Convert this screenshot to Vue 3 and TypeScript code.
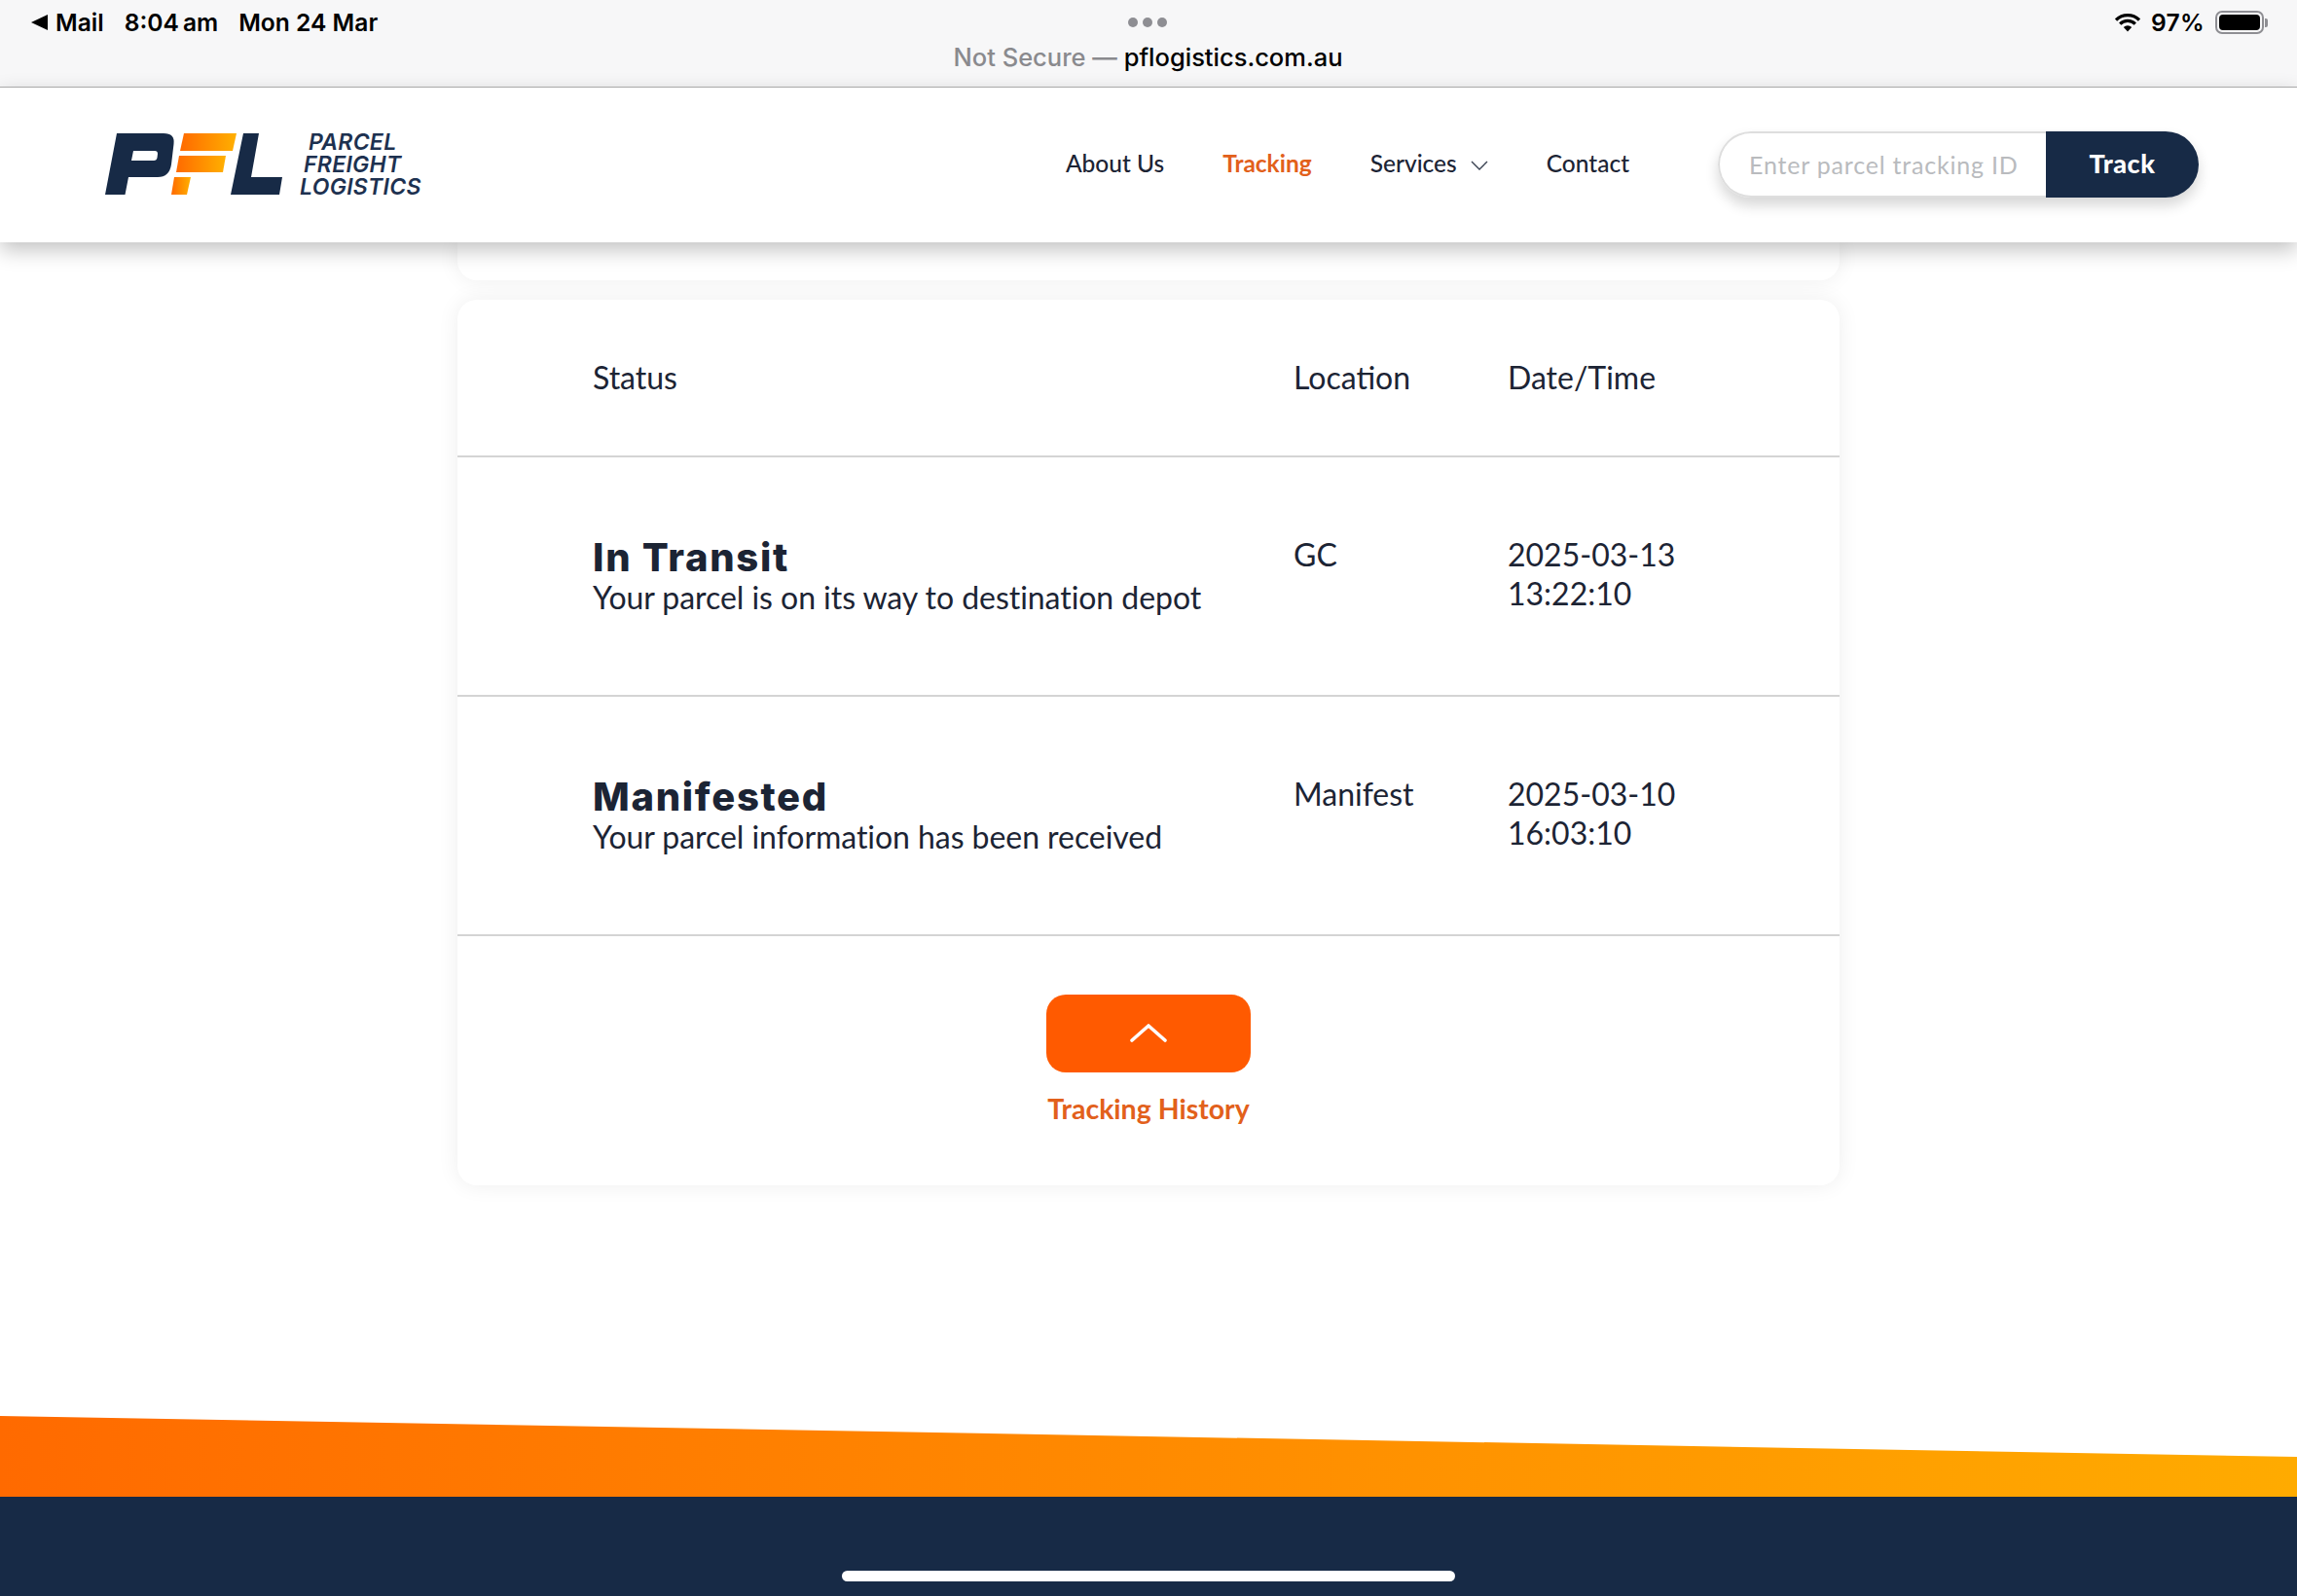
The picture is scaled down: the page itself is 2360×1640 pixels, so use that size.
<script setup lang="ts">
interface TrackingEvent {
  status: string
  detail: string
  location: string
  date: string
  time: string
}

const events: TrackingEvent[] = [
  {
    status: 'In Transit',
    detail: 'Your parcel is on its way to destination depot',
    location: 'GC',
    date: '2025-03-13',
    time: '13:22:10',
  },
  {
    status: 'Manifested',
    detail: 'Your parcel information has been received',
    location: 'Manifest',
    date: '2025-03-10',
    time: '16:03:10',
  },
]

const navLinks = [
  { label: 'About Us', active: false, caret: false },
  { label: 'Tracking', active: true, caret: false },
  { label: 'Services', active: false, caret: true },
  { label: 'Contact', active: false, caret: false },
]
</script>

<template>
  <div class="screen">
    <div class="safari-bar">
      <div class="status-row">
        <div class="status-left">
          <span class="back-mail"><i class="back-tri"></i>Mail</span>
          <span>8:04<span class="ampm">am</span></span>
          <span>Mon 24 Mar</span>
        </div>
        <div class="dots"><i></i><i></i><i></i></div>
        <div class="status-right">
          <svg class="wifi" viewBox="0 0 26 20" width="26" height="20">
            <path d="M1 7.5a17 17 0 0 1 24 0" fill="none" stroke="#000" stroke-width="3.2" />
            <path d="M5.2 11.7a11 11 0 0 1 15.6 0" fill="none" stroke="#000" stroke-width="3.2" />
            <path d="M13 19.5 8.8 15a6 6 0 0 1 8.4 0z" fill="#000" />
          </svg>
          <span class="pct">97%</span>
          <span class="battery"><i class="level"></i></span>
          <i class="battery-cap"></i>
        </div>
      </div>
      <div class="url"><span class="insecure">Not Secure — </span>pflogistics.com.au</div>
    </div>

    <header class="site-header">
      <a class="logo" aria-label="PFL Parcel Freight Logistics">
        <svg class="logo-mark" viewBox="0 0 185 64" width="185" height="64">
          <defs>
            <linearGradient id="flame" x1="0" y1="0" x2="1" y2="0">
              <stop offset="0" stop-color="#ff6a00" />
              <stop offset="1" stop-color="#ffb000" />
            </linearGradient>
          </defs>
          <path
            fill="#172a46"
            fill-rule="evenodd"
            d="M12 0H60Q72 0 70.5 11L68 32Q66 45 54 45H24L20.5 63H0ZM29 18 27 28H50Q53 28 53.5 25L54 21Q54 18 51 18Z"
          />
          <polygon fill="url(#flame)" points="81,0 135,0 131,18 77,18" />
          <polygon fill="url(#flame)" points="76,23 124,23 121,40 73,40" />
          <polygon fill="url(#flame)" points="71,45 88,45 84,63 68,63" />
          <polygon fill="#172a46" points="142,0 158,0 150,45 182,45 179,63 129,63" />
        </svg>
        <span class="wordmark">
          <span class="wm-1">PARCEL</span>
          <span class="wm-2">FREIGHT</span>
          <span class="wm-3">LOGISTICS</span>
        </span>
      </a>

      <nav class="nav">
        <a v-for="link in navLinks" :key="link.label" class="nav-link" :class="{ active: link.active }">
          {{ link.label }}
          <svg v-if="link.caret" class="caret" viewBox="0 0 18 10" width="18" height="10">
            <path d="M1 1l8 8 8-8" fill="none" stroke="#3a4252" stroke-width="1.4" />
          </svg>
        </a>
      </nav>

      <form class="track-form" @submit.prevent>
        <input class="track-input" type="text" placeholder="Enter parcel tracking ID" />
        <button class="track-btn" type="submit">Track</button>
      </form>
    </header>

    <main class="content">
      <div class="card stub"></div>

      <section class="card history">
        <div class="row head">
          <div>Status</div>
          <div>Location</div>
          <div>Date/Time</div>
        </div>

        <div v-for="ev in events" :key="ev.status" class="row event">
          <div>
            <h3 class="ev-title">{{ ev.status }}</h3>
            <p class="ev-detail">{{ ev.detail }}</p>
          </div>
          <div class="cell">{{ ev.location }}</div>
          <div class="cell">{{ ev.date }}<br />{{ ev.time }}</div>
        </div>

        <div class="toggle">
          <button class="toggle-btn" type="button" aria-label="Collapse tracking history">
            <svg viewBox="0 0 38 20" width="38" height="20">
              <path d="M2 18 19 3l17 15" fill="none" stroke="#fff" stroke-width="3.6" stroke-linecap="round" stroke-linejoin="round" />
            </svg>
          </button>
          <span class="toggle-label">Tracking History</span>
        </div>
      </section>
    </main>

    <footer class="footer">
      <div class="wedge"></div>
      <div class="navy"><i class="home-bar"></i></div>
    </footer>
  </div>
</template>

<style>
html,
body {
  margin: 0;
  background: #fff;
}
</style>

<style scoped>
.screen {
  width: 2360px;
  height: 1640px;
  display: flex;
  flex-direction: column;
  overflow: hidden;
  background: #fff;
  font-family: Lato, 'Liberation Sans', sans-serif;
  color: #1c2434;
}

/* ios chrome */
.safari-bar {
  height: 89px;
  flex: none;
  box-sizing: border-box;
  background: #f7f7f8;
  padding: 8px 30px 0 32px;
  font-family: Inter, 'Liberation Sans', sans-serif;
  color: #000;
}
.status-row {
  position: relative;
  display: flex;
  justify-content: space-between;
  align-items: center;
  height: 30px;
  font-size: 24.6px;
  font-weight: 600;
}
.status-left {
  display: flex;
  gap: 21px;
}
.back-mail {
  display: flex;
  align-items: center;
  gap: 8px;
}
.back-tri {
  width: 0;
  height: 0;
  border-style: solid;
  border-width: 8px 17px 8px 0;
  border-color: transparent #000 transparent transparent;
}
.ampm {
  margin-left: 4px;
}
.dots {
  position: absolute;
  left: 1127px;
  top: 10px;
  display: flex;
  gap: 5px;
}
.dots i {
  width: 10px;
  height: 10px;
  border-radius: 50%;
  background: #8e8e93;
}
.status-right {
  display: flex;
  align-items: center;
}
.pct {
  margin-left: 11px;
  letter-spacing: 0.3px;
}
.battery {
  margin-left: 11px;
  width: 50px;
  height: 24px;
  box-sizing: border-box;
  border: 2px solid #8e8e93;
  border-radius: 7px;
  padding: 2px;
  display: flex;
}
.level {
  flex: 1;
  background: #000;
  border-radius: 4px;
}
.battery-cap {
  width: 3px;
  height: 9px;
  background: #8e8e93;
  border-radius: 0 2px 2px 0;
  margin-left: 1px;
}
.url {
  margin: 4px 3px 0 0;
  text-align: center;
  font-size: 25.5px;
  font-weight: 500;
  line-height: 34px;
}
.insecure {
  color: #8a8a8e;
}

/* site header */
.site-header {
  position: relative;
  z-index: 2;
  flex: none;
  height: 160px;
  box-sizing: border-box;
  border-top: 1px solid #a9a9a9;
  background: #fff;
  display: flex;
  align-items: center;
  padding: 0 101px 2px 108px;
  box-shadow: 0 8px 20px rgba(0, 0, 0, 0.24);
}
.logo {
  display: flex;
  align-items: center;
  gap: 15px;
}
.logo-mark {
  display: block;
}
.wordmark {
  display: flex;
  flex-direction: column;
  margin-top: 2px;
  font-family: Inter, 'Liberation Sans', sans-serif;
  font-style: italic;
  font-weight: 600;
  font-size: 23px;
  line-height: 23px;
  letter-spacing: 0.3px;
  color: #1d3150;
}
.wm-1 {
  margin-left: 9px;
}
.wm-2 {
  margin-left: 4px;
}
.nav {
  margin-left: auto;
  display: flex;
  align-items: center;
  gap: 60px;
}
.nav-link {
  display: flex;
  align-items: center;
  gap: 14px;
  margin-top: -2px;
  font-size: 24.5px;
  font-weight: 500;
  color: #1c2434;
}
.nav-link.active {
  color: #e2601b;
  font-weight: 700;
}
.caret {
  margin-top: 4px;
}
.track-form {
  margin-left: 91px;
  width: 494px;
  height: 68px;
  display: flex;
  border-radius: 34px;
  box-shadow: 0 8px 14px rgba(0, 0, 0, 0.16);
}
.track-input {
  flex: 1;
  min-width: 0;
  box-sizing: border-box;
  padding: 0 0 0 30px;
  border: 2px solid #dedede;
  border-right: 0;
  border-radius: 34px 0 0 34px;
  outline: none;
  background: #fff;
  font-family: Lato, sans-serif;
  font-size: 25px;
  letter-spacing: 0.8px;
}
.track-input::placeholder {
  color: #b9bbbe;
  opacity: 1;
}
.track-btn {
  width: 157px;
  border: 0;
  padding: 0 0 2px;
  border-radius: 0 34px 34px 0;
  background: #172a46;
  color: #fff;
  font-family: Lato, sans-serif;
  font-size: 27px;
  font-weight: 900;
  letter-spacing: 0.5px;
}

/* cards */
.content {
  width: 1420px;
  margin: 0 auto;
  flex: none;
  display: flex;
  flex-direction: column;
  gap: 20px;
}
.card {
  background: #fff;
  border-radius: 20px;
  box-shadow: 0 0 22px rgba(0, 0, 0, 0.07);
}
.stub {
  height: 39px;
  border-radius: 0 0 20px 20px;
}
.row {
  display: grid;
  grid-template-columns: 720px 220px 1fr;
  padding-left: 139px;
}
.head {
  height: 160px;
  box-sizing: border-box;
  padding-bottom: 2px;
  align-items: center;
  font-size: 32px;
}
.event {
  border-top: 2px solid #d4d4d4;
  height: 246px;
  box-sizing: border-box;
  padding-top: 80px;
  font-size: 32px;
  line-height: 40px;
}
.ev-title {
  margin: 0;
  font-family: Inter, 'Liberation Sans', sans-serif;
  font-size: 40px;
  font-weight: 800;
  line-height: 46px;
  letter-spacing: 1.7px;
  color: #1c2434;
}
.ev-detail {
  margin: 0;
  line-height: 36px;
  letter-spacing: -0.05px;
}
.toggle {
  border-top: 2px solid #d4d4d4;
  display: flex;
  flex-direction: column;
  align-items: center;
  padding: 60px 0 60px;
}
.toggle-btn {
  width: 210px;
  height: 80px;
  border: 0;
  padding: 0 0 3px;
  border-radius: 20px;
  background: #ff5a00;
  display: flex;
  align-items: center;
  justify-content: center;
}
.toggle-label {
  margin-top: 18px;
  font-size: 28.5px;
  line-height: 38px;
  font-weight: 700;
  color: #e2601b;
}

/* footer */
.footer {
  margin-top: auto;
  flex: none;
}
.wedge {
  height: 83px;
  background: linear-gradient(90deg, #ff6a00, #ffab00);
  clip-path: polygon(0 0, 100% 42px, 100% 100%, 0 100%);
}
.navy {
  position: relative;
  height: 102px;
  background: #172a46;
}
.home-bar {
  position: absolute;
  left: 865px;
  top: 76px;
  width: 630px;
  height: 11px;
  border-radius: 6px;
  background: #fff;
}
</style>
